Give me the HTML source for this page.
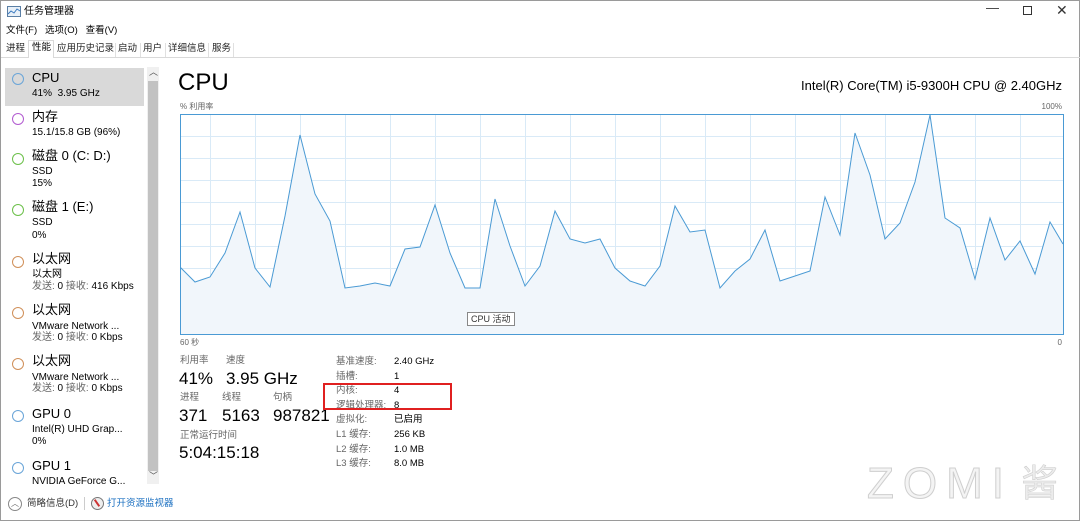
<!DOCTYPE html>
<html><head><meta charset="utf-8"><style>
*{margin:0;padding:0;box-sizing:border-box}
body{width:1080px;height:521px;background:#fff;font-family:"Liberation Sans","Noto Sans CJK SC",sans-serif;color:#000;position:relative;overflow:hidden;border:1px solid #9a9a9a}
.a{position:absolute;white-space:nowrap;line-height:1.15}
.s{font-size:10px}
.g{color:#666}
.dot{position:absolute;width:12px;height:12px;border-radius:50%;border:1.5px solid}
.t{font-size:9.5px;top:43px;color:#222}
</style></head><body>
<svg class="a" style="left:6px;top:5px" width="14" height="12"><rect x="0.5" y="0.5" width="13" height="10" fill="#e8f0f8" stroke="#5a7fa5"/><polyline points="1,8 4,5 7,7 10,3 13,5" fill="none" stroke="#3a7ac0"/></svg>
<div class="a" style="left:23px;top:5px;font-size:10px">任务管理器</div>
<div class="a" style="left:985px;top:0;font-size:13px;color:#333">—</div>
<div class="a" style="left:1022px;top:5px;width:9px;height:9px;border:1px solid #333"></div>
<div class="a" style="left:1055px;top:1px;font-size:14px;color:#333">✕</div>
<div class="a" style="left:5px;top:25px;font-size:9.5px">文件(F)&nbsp;&nbsp;&nbsp;选项(O)&nbsp;&nbsp;&nbsp;查看(V)</div>
<div class="a" style="left:0;top:56px;width:1080px;height:1px;background:#d9d9d9"></div>
<div class="a t" style="left:5px">进程</div>
<div class="a" style="left:27px;top:39px;width:26px;height:18px;background:#fff;border:1px solid #d9d9d9;border-bottom:none"></div>
<div class="a t" style="left:31px;top:42px;color:#000">性能</div>
<div class="a t" style="left:56px">应用历史记录</div>
<div class="a t" style="left:117px">启动</div>
<div class="a t" style="left:142px">用户</div>
<div class="a t" style="left:167px">详细信息</div>
<div class="a t" style="left:211px">服务</div>
<div class="a" style="left:114px;top:42px;width:1px;height:14px;background:#e0e0e0"></div>
<div class="a" style="left:139px;top:42px;width:1px;height:14px;background:#e0e0e0"></div>
<div class="a" style="left:164px;top:42px;width:1px;height:14px;background:#e0e0e0"></div>
<div class="a" style="left:207px;top:42px;width:1px;height:14px;background:#e0e0e0"></div>
<div class="a" style="left:232px;top:42px;width:1px;height:14px;background:#e0e0e0"></div>
<div class="a" style="left:4px;top:67px;width:139px;height:38px;background:#d9d9d9"></div>
<div class="a" style="left:146px;top:66px;width:12px;height:417px;background:#f0f0f0"></div>
<div class="a" style="left:147px;top:80px;width:10px;height:390px;background:#c2c2c2"></div>
<div class="a" style="left:148px;top:66px;font-size:9px;color:#555">︿</div>
<div class="a" style="left:148px;top:470px;font-size:9px;color:#555">﹀</div>

<div class="dot" style="left:11px;top:72px;border-color:#6aa5d8"></div>
<div class="a" style="left:31px;top:70px;font-size:13px">CPU</div>
<div class="a s" style="left:31px;top:87px">41%&nbsp; 3.95 GHz</div>

<div class="dot" style="left:11px;top:112px;border-color:#b25bd0"></div>
<div class="a" style="left:31px;top:109px;font-size:13px">内存</div>
<div class="a s" style="left:31px;top:126px">15.1/15.8 GB (96%)</div>

<div class="dot" style="left:11px;top:152px;border-color:#6cc04a"></div>
<div class="a" style="left:31px;top:148px;font-size:13px">磁盘 0 (C: D:)</div>
<div class="a s" style="left:31px;top:165px">SSD</div>
<div class="a s" style="left:31px;top:177px">15%</div>

<div class="dot" style="left:11px;top:203px;border-color:#6cc04a"></div>
<div class="a" style="left:31px;top:199px;font-size:13px">磁盘 1 (E:)</div>
<div class="a s" style="left:31px;top:216px">SSD</div>
<div class="a s" style="left:31px;top:229px">0%</div>

<div class="dot" style="left:11px;top:255px;border-color:#d0905a"></div>
<div class="a" style="left:31px;top:251px;font-size:13px">以太网</div>
<div class="a s" style="left:31px;top:268px">以太网</div>
<div class="a s" style="left:31px;top:280px"><span class="g">发送:</span> 0 <span class="g">接收:</span> 416 Kbps</div>

<div class="dot" style="left:11px;top:306px;border-color:#d0905a"></div>
<div class="a" style="left:31px;top:302px;font-size:13px">以太网</div>
<div class="a s" style="left:31px;top:320px">VMware Network ...</div>
<div class="a s" style="left:31px;top:331px"><span class="g">发送:</span> 0 <span class="g">接收:</span> 0 Kbps</div>

<div class="dot" style="left:11px;top:357px;border-color:#d0905a"></div>
<div class="a" style="left:31px;top:353px;font-size:13px">以太网</div>
<div class="a s" style="left:31px;top:371px">VMware Network ...</div>
<div class="a s" style="left:31px;top:382px"><span class="g">发送:</span> 0 <span class="g">接收:</span> 0 Kbps</div>

<div class="dot" style="left:11px;top:409px;border-color:#6aa5d8"></div>
<div class="a" style="left:31px;top:406px;font-size:13px">GPU 0</div>
<div class="a s" style="left:31px;top:423px">Intel(R) UHD Grap...</div>
<div class="a s" style="left:31px;top:435px">0%</div>

<div class="dot" style="left:11px;top:461px;border-color:#6aa5d8"></div>
<div class="a" style="left:31px;top:458px;font-size:13px">GPU 1</div>
<div class="a s" style="left:31px;top:475px">NVIDIA GeForce G...</div>

<div class="a" style="left:7px;top:496px;width:14px;height:14px;border-radius:50%;border:1px solid #888;font-size:8px;color:#666;text-align:center;line-height:12px">︿</div>
<div class="a" style="left:26px;top:498px;font-size:9.5px;color:#333">简略信息(D)</div>
<div class="a" style="left:83px;top:496px;width:1px;height:13px;background:#ccc"></div>
<div class="a" style="left:90px;top:496px;width:13px;height:13px;border-radius:50%;border:1.5px solid #777;background:#eee"></div>
<div class="a" style="left:95px;top:498px;width:2px;height:8px;background:#c33;transform:rotate(-35deg)"></div>
<div class="a" style="left:106px;top:498px;font-size:9.5px;color:#1a6fc0">打开资源监视器</div>

<div class="a" style="left:177px;top:68px;font-size:24px">CPU</div>
<div class="a" style="right:17px;top:78px;font-size:13px">Intel(R) Core(TM) i5-9300H CPU @ 2.40GHz</div>
<div class="a" style="left:179px;top:101px;font-size:8px;color:#666">% 利用率</div>
<div class="a" style="right:17px;top:101px;font-size:8px;color:#666">100%</div>
<svg class="a" style="left:179px;top:113px" width="884" height="221">
<g stroke="#d9eaf7" stroke-width="1">
<line x1="0" y1="22.5" x2="884" y2="22.5"/><line x1="0" y1="44.5" x2="884" y2="44.5"/><line x1="0" y1="66.5" x2="884" y2="66.5"/><line x1="0" y1="88.5" x2="884" y2="88.5"/><line x1="0" y1="110.5" x2="884" y2="110.5"/><line x1="0" y1="132.5" x2="884" y2="132.5"/><line x1="0" y1="154.5" x2="884" y2="154.5"/><line x1="0" y1="176.5" x2="884" y2="176.5"/><line x1="0" y1="198.5" x2="884" y2="198.5"/>
<line x1="30.5" y1="0" x2="30.5" y2="221"/><line x1="75.5" y1="0" x2="75.5" y2="221"/><line x1="120.5" y1="0" x2="120.5" y2="221"/><line x1="165.5" y1="0" x2="165.5" y2="221"/><line x1="210.5" y1="0" x2="210.5" y2="221"/><line x1="255.5" y1="0" x2="255.5" y2="221"/><line x1="300.5" y1="0" x2="300.5" y2="221"/><line x1="345.5" y1="0" x2="345.5" y2="221"/><line x1="390.5" y1="0" x2="390.5" y2="221"/><line x1="435.5" y1="0" x2="435.5" y2="221"/><line x1="480.5" y1="0" x2="480.5" y2="221"/><line x1="525.5" y1="0" x2="525.5" y2="221"/><line x1="570.5" y1="0" x2="570.5" y2="221"/><line x1="615.5" y1="0" x2="615.5" y2="221"/><line x1="660.5" y1="0" x2="660.5" y2="221"/><line x1="705.5" y1="0" x2="705.5" y2="221"/><line x1="750.5" y1="0" x2="750.5" y2="221"/><line x1="795.5" y1="0" x2="795.5" y2="221"/><line x1="840.5" y1="0" x2="840.5" y2="221"/>
</g>
<g transform="translate(-179,-113)">
<polygon fill="#f1f6fb" stroke="none" points="179,334 179,266 194,281 209,276 224,252 239,211 254,267 269,286 284,215 299,134 314,193 329,220 344,287 359,285 374,282 389,285 404,248 419,246 434,204 449,252 464,287 479,287 494,198 509,245 524,285 539,265 554,210 569,238 584,242 599,238 614,267 629,280 644,285 659,265 674,205 689,231 704,229 719,287 734,270 749,258 764,229 779,280 794,275 809,270 824,196 839,234 854,132 869,174 884,238 899,222 914,181 929,114 944,217 959,227 974,278 989,217 1004,259 1019,240 1034,273 1049,221 1062,243 1062,334"/>
<polyline fill="none" stroke="#4a9ad4" stroke-width="1" points="179,266 194,281 209,276 224,252 239,211 254,267 269,286 284,215 299,134 314,193 329,220 344,287 359,285 374,282 389,285 404,248 419,246 434,204 449,252 464,287 479,287 494,198 509,245 524,285 539,265 554,210 569,238 584,242 599,238 614,267 629,280 644,285 659,265 674,205 689,231 704,229 719,287 734,270 749,258 764,229 779,280 794,275 809,270 824,196 839,234 854,132 869,174 884,238 899,222 914,181 929,114 944,217 959,227 974,278 989,217 1004,259 1019,240 1034,273 1049,221 1062,243"/>
</g>
<rect x="0.5" y="0.5" width="883" height="220" fill="none" stroke="#4a9ad4"/>
</svg>
<div class="a" style="left:466px;top:311px;padding:1px 3px;border:1px solid #888;background:#fff;font-size:9px;color:#333">CPU 活动</div>
<div class="a" style="left:179px;top:337px;font-size:8px;color:#666">60 秒</div>
<div class="a" style="right:17px;top:337px;font-size:8px;color:#666">0</div>

<div class="a g" style="left:179px;top:355px;font-size:9.5px">利用率</div>
<div class="a g" style="left:225px;top:355px;font-size:9.5px">速度</div>
<div class="a" style="left:178px;top:368px;font-size:17px">41%</div>
<div class="a" style="left:225px;top:368px;font-size:17px">3.95 GHz</div>
<div class="a g" style="left:179px;top:392px;font-size:9.5px">进程</div>
<div class="a g" style="left:221px;top:392px;font-size:9.5px">线程</div>
<div class="a g" style="left:272px;top:392px;font-size:9.5px">句柄</div>
<div class="a" style="left:178px;top:405px;font-size:17px">371</div>
<div class="a" style="left:221px;top:405px;font-size:17px">5163</div>
<div class="a" style="left:272px;top:405px;font-size:17px">987821</div>
<div class="a g" style="left:179px;top:430px;font-size:9.5px">正常运行时间</div>
<div class="a" style="left:178px;top:442px;font-size:17px">5:04:15:18</div>

<div class="a g" style="left:335px;top:354px;font-size:9.5px;line-height:14.6px">基准速度:<br>插槽:<br>内核:<br>逻辑处理器:<br>虚拟化:<br>L1 缓存:<br>L2 缓存:<br>L3 缓存:</div>
<div class="a" style="left:393px;top:354px;font-size:9.5px;line-height:14.6px">2.40 GHz<br>1<br>4<br>8<br>已启用<br>256 KB<br>1.0 MB<br>8.0 MB</div>
<div class="a" style="left:322px;top:382px;width:129px;height:27px;border:2px solid #e02020"></div>

<div class="a" style="left:866px;top:461px;font-size:44px;color:#f4f4f4;-webkit-text-stroke:1px #cfcfcf;letter-spacing:9px;line-height:1">ZOMI</div>
<div class="a" style="left:1020px;top:464px;font-size:37px;color:#ececec;-webkit-text-stroke:0.6px #cfcfcf;line-height:1">酱</div>
</body></html>
